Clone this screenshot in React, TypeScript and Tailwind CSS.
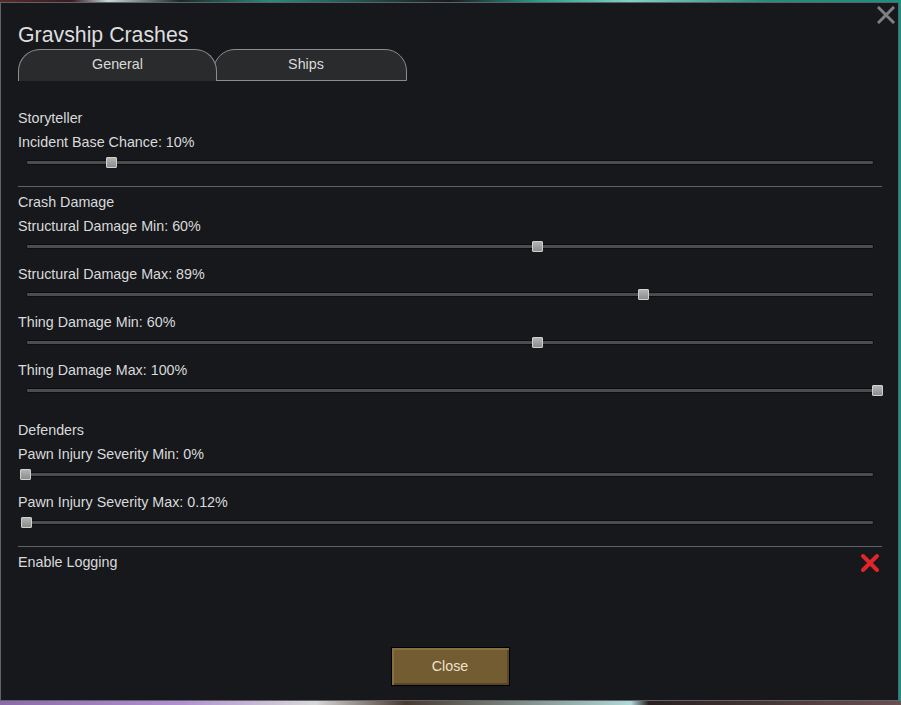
import React from "react";

const font = { fontFamily: '"Liberation Sans", Arial, sans-serif' };

function Slider({ x }: { x: number }) {
  return (
    <div className="h-[16px] px-[8px] flex items-center">
      <div className="relative w-full h-[5px] rounded-[2px] bg-[#4b4c4e] border border-[#0c0d0f]">
        <div
          className="absolute top-[-4px] w-[11px] h-[11px] border border-[#d0d0d0] bg-[linear-gradient(180deg,#b4b4b4,#8c8c8c)] rounded-[1px]"
          style={{ left: x - 26 - 5 }}
        />
      </div>
    </div>
  );
}

function Label({ children }: { children: React.ReactNode }) {
  return <div className="h-[24px] leading-[24px] text-[14.3px] text-[#dadada]">{children}</div>;
}

function Sep() {
  return <div className="h-px bg-[#5e6165]" />;
}

export default function App() {
  return (
    <div
      className="w-[901px] h-[705px] overflow-hidden bg-[linear-gradient(90deg,#5a2a2a_0%,#3a1a22_8%,#c8d8d8_12%,#1a2a2a_20%,#2a8a7a_30%,#1a1a20_50%,#2aa08a_60%,#80d0c8_70%,#2a8a78_85%,#1a9080_100%)]"
      style={font}
    >
      <div className="mt-[2px] w-[899px] h-[699px] bg-[#16181c] border border-[#5f6368] relative flex flex-col">
        <div className="absolute right-[3px] top-[3px] w-[18px] h-[18px]">
          <svg viewBox="0 0 18 18" width="18" height="18">
            <path d="M2 2 L16 16 M16 2 L2 16" stroke="#7d7f82" strokeWidth="3" strokeLinecap="square" />
          </svg>
        </div>
        <div className="pl-[17px] pr-[16px] pt-[20px] flex flex-col">
          <div className="h-[24px] leading-[24px] text-[21.3px] text-[#dedede]">Gravship Crashes</div>
          <div className="mt-[2px] flex h-[32px]">
            <div className="relative z-10 w-[199px] h-[32px] pb-[1px] rounded-t-[22px] border border-b-0 border-[#8a8c8f] bg-[#2a2b2d] flex items-center justify-center text-[14.3px] text-[#dadada]">
              General
            </div>
            <div className="ml-[-4px] w-[194px] h-[32px] pb-[1px] pr-[8px] rounded-t-[22px] border border-[#8a8c8f] bg-[#2a2b2d] flex items-center justify-center text-[14.3px] text-[#dadada]">
              Ships
            </div>
          </div>
          <div className="mt-[25px]">
            <Label>Storyteller</Label>
            <Label>Incident Base Chance: 10%</Label>
            <Slider x={110} />
          </div>
          <div className="mt-[16px]">
            <Sep />
          </div>
          <div className="mt-[3px]">
            <Label>Crash Damage</Label>
            <Label>Structural Damage Min: 60%</Label>
            <Slider x={536} />
            <div className="mt-[8px]">
              <Label>Structural Damage Max: 89%</Label>
              <Slider x={642} />
            </div>
            <div className="mt-[8px]">
              <Label>Thing Damage Min: 60%</Label>
              <Slider x={536} />
            </div>
            <div className="mt-[8px]">
              <Label>Thing Damage Max: 100%</Label>
              <Slider x={876} />
            </div>
          </div>
          <div className="mt-[20px]">
            <Label>Defenders</Label>
            <Label>Pawn Injury Severity Min: 0%</Label>
            <Slider x={24} />
            <div className="mt-[8px]">
              <Label>Pawn Injury Severity Max: 0.12%</Label>
              <Slider x={25} />
            </div>
          </div>
          <div className="mt-[16px]">
            <Sep />
          </div>
          <div className="mt-[3px] flex items-center justify-between">
            <Label>Enable Logging</Label>
            <svg viewBox="0 0 22 22" width="22" height="22" className="mr-[1px] mt-[2px]">
              <path d="M4 4 L18 18 M18 4 L4 18" stroke="#e0262a" strokeWidth="4" strokeLinecap="round" />
            </svg>
          </div>
        </div>
        <div className="mt-auto mb-[14px] flex justify-center">
          <div className="ml-[1px] w-[119px] h-[39px] border border-black bg-[#735b32] shadow-[inset_2px_2px_0_#87703f,inset_-2px_-2px_0_#59462a] flex items-center justify-center text-[14.3px] text-[#ece2cc]">
            Close
          </div>
        </div>
      </div>
      <div className="h-[4px] bg-[linear-gradient(90deg,#8a6aa8_0%,#b090d0_20%,#d8d8d8_35%,#4a3a30_45%,#b0d8d8_70%,#2a2020_72%,#6a5050_100%)]" />
    </div>
  );
}
